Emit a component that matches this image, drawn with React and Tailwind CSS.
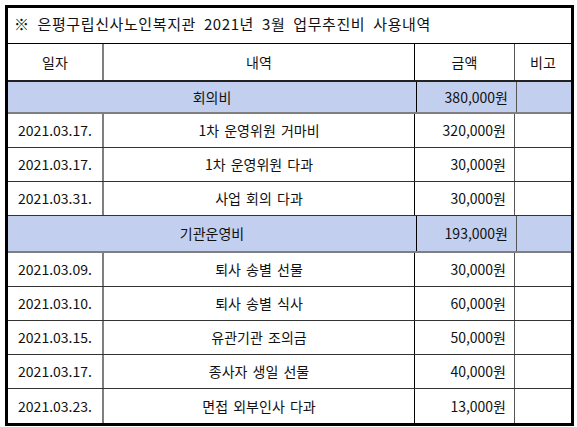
const rows = [
  { group: "회의비", amount: "380,000원" },
  { date: "2021.03.17.", text: "1차 운영위원 거마비", amount: "320,000원" },
  { date: "2021.03.17.", text: "1차 운영위원 다과", amount: "30,000원" },
  { date: "2021.03.31.", text: "사업 회의 다과", amount: "30,000원" },
  { group: "기관운영비", amount: "193,000원" },
  { date: "2021.03.09.", text: "퇴사 송별 선물", amount: "30,000원" },
  { date: "2021.03.10.", text: "퇴사 송별 식사", amount: "60,000원" },
  { date: "2021.03.15.", text: "유관기관 조의금", amount: "50,000원" },
  { date: "2021.03.17.", text: "종사자 생일 선물", amount: "40,000원" },
  { date: "2021.03.23.", text: "면접 외부인사 다과", amount: "13,000원" },
];

export default function App() {
  return (
    <div
      className="w-[577px] h-[427px] bg-white pl-[5px] pt-[5px] text-[14px] text-[#111]"
      style={{ fontFamily: '"Noto Sans CJK KR", "Noto Sans", sans-serif' }}
    >
      <div className="w-[569px] border-[3px] border-black">
        <div className="h-[36px] flex items-center pl-[6px] pb-[2px] border-b border-black text-[15px] tracking-[0.6px] [word-spacing:4px]">
          ※ 은평구립신사노인복지관 2021년 3월 업무추진비 사용내역
        </div>
        <div className="flex h-[38px] border-b-2 border-[#222] [word-spacing:3px]">
          <div className="w-[96px] flex items-center justify-center border-r-2 border-[#7f7f7f]">일자</div>
          <div className="w-[311px] flex items-center justify-center border-r border-black">내역</div>
          <div className="w-[100px] flex items-center justify-center border-r border-[#555]">금액</div>
          <div className="flex-1 flex items-center justify-center">비고</div>
        </div>
        {rows.map((r, i) =>
          r.group ? (
            <div key={i} className={`flex bg-[#c3cfee] border-b-2 border-[#7f7f7f] ${i === 0 ? "h-[32px]" : "h-[37px]"}`}>
              <div className="w-[409px] flex items-center justify-center border-r border-black">{r.group}</div>
              <div className="w-[100px] flex items-center justify-end pr-[8px] border-r border-[#555]">{r.amount}</div>
              <div className="flex-1"></div>
            </div>
          ) : (
            <div key={i} className={`flex h-[34px] [word-spacing:2px] ${i === rows.length - 1 ? "" : "border-b border-[#333]"}`}>
              <div className="w-[96px] flex items-center justify-center border-r-2 border-[#7f7f7f]">{r.date}</div>
              <div className="w-[311px] flex items-center justify-center border-r border-black">{r.text}</div>
              <div className="w-[100px] flex items-center justify-end pr-[8px] border-r border-[#555]">{r.amount}</div>
              <div className="flex-1"></div>
            </div>
          )
        )}
      </div>
    </div>
  );
}
